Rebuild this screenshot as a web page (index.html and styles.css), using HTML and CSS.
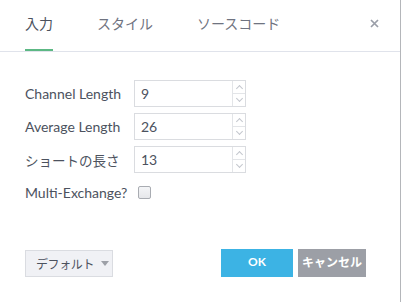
FILE: index.html
```html
<!DOCTYPE html>
<html lang="ja">

<head>
  <meta charset="UTF-8">
  <title>Indicator Settings</title>
  <link rel="stylesheet" href="styles.css">
</head>

<body>
  <div class="dialog">
    <div class="tabs">
      <a class="tab active" href="#">入力</a>
      <a class="tab" href="#">スタイル</a>
      <a class="tab" href="#">ソースコード</a>
      <span class="close">
        <svg width="9" height="9" viewBox="0 0 9 9">
          <path d="M1 1L8 8M8 1L1 8" stroke="#9a9ea8" stroke-width="1.7" fill="none" />
        </svg>
      </span>
    </div>

    <div class="content">
      <label class="label" for="channel">Channel Length</label>
      <div class="spin">
        <input id="channel" type="text" value="9">
        <div class="arrows">
          <span class="up"></span>
          <span class="down"></span>
        </div>
      </div>

      <label class="label" for="average">Average Length</label>
      <div class="spin">
        <input id="average" type="text" value="26">
        <div class="arrows">
          <span class="up"></span>
          <span class="down"></span>
        </div>
      </div>

      <label class="label label-ja" for="short">ショートの長さ</label>
      <div class="spin">
        <input id="short" type="text" value="13">
        <div class="arrows">
          <span class="up"></span>
          <span class="down"></span>
        </div>
      </div>

      <label class="label" for="multi">Multi-Exchange?</label>
      <div class="check-cell">
        <span class="checkbox" id="multi"></span>
      </div>
    </div>

    <div class="footer">
      <button class="btn-default" type="button"><span class="btn-text">デフォルト</span><span class="caret"></span></button>
      <div class="actions">
        <button class="btn-ok" type="button">OK</button>
        <button class="btn-cancel" type="button">キャンセル</button>
      </div>
    </div>
  </div>
</body>

</html>
```

FILE: styles.css
```css
body {
  margin: 0;
  background-color: #ffffff;
  font-family: 'Lato', 'Noto Sans CJK JP', sans-serif;
  color: #4c525e;
}

.dialog {
  width: 401px;
  height: 302px;
  box-sizing: border-box;
  border-right: 1px solid #b4b6ba;
  display: flex;
  flex-direction: column;
}

.tabs {
  display: flex;
  align-items: flex-end;
  height: 51px;
  padding: 0 21px 0 25px;
  border-bottom: 1px solid #e0e3eb;
}

.tab {
  display: block;
  height: 49px;
  line-height: 48px;
  margin-right: 44px;
  font-size: 14px;
  color: #6f7380;
  text-decoration: none;
  border-bottom: 2px solid transparent;
}

.tab.active {
  color: #4c525e;
  border-bottom-color: #5cb884;
}

.close {
  margin-left: auto;
  align-self: center;
  display: flex;
  margin-bottom: 5px;
}

.content {
  display: grid;
  grid-template-columns: 109px 112px;
  grid-auto-rows: 27px;
  row-gap: 6px;
  align-items: center;
  padding: 28px 25px 0;
}

.label {
  font-size: 14px;
  color: #4c525e;
  white-space: nowrap;
}

.label-ja {
  font-size: 13.5px;
}

.spin {
  display: flex;
  height: 27px;
  box-sizing: border-box;
  border: 1px solid #dadce0;
}

.spin input {
  flex: 1;
  min-width: 0;
  border: none;
  outline: none;
  padding: 0 6px;
  font-family: 'Lato', sans-serif;
  font-size: 14px;
  color: #4c525e;
  background: transparent;
}

.arrows {
  width: 12px;
  display: flex;
  flex-direction: column;
  border-left: 1px solid #e3e5e8;
}

.arrows span {
  flex: 1;
  position: relative;
}

.arrows .up {
  border-bottom: 1px solid #e3e5e8;
}

.arrows span::after {
  content: "";
  position: absolute;
  left: 4px;
  width: 4px;
  height: 4px;
  border-left: 1px solid #c3c7cd;
  border-top: 1px solid #c3c7cd;
}

.arrows .up::after {
  top: 5px;
  transform: rotate(45deg);
}

.arrows .down::after {
  top: 2px;
  transform: rotate(225deg);
}

.check-cell {
  display: flex;
  align-items: center;
}

.checkbox {
  width: 11px;
  height: 11px;
  margin-left: 4px;
  border: 1px solid #a9acb2;
  border-radius: 2px;
  background: linear-gradient(#f4f5f7, #e6e7ea);
}

.footer {
  margin-top: auto;
  display: flex;
  justify-content: space-between;
  align-items: flex-end;
  padding: 0 34px 25px 25px;
}

.footer button {
  border: none;
  font-family: 'Lato', 'Noto Sans CJK JP', sans-serif;
  cursor: pointer;
  padding: 0;
  white-space: nowrap;
}

.btn-default {
  width: 88px;
  height: 27px;
  box-sizing: border-box;
  border: 1px solid #dadce1 !important;
  background-color: #f0f1f5;
  color: #4c525e;
  font-size: 12px;
  letter-spacing: -0.4px;
  display: flex;
  align-items: center;
  padding-left: 10px !important;
}

.btn-text {
  margin-right: 7px;
}

.caret {
  flex-shrink: 0;
  width: 0;
  height: 0;
  border-left: 4px solid transparent;
  border-right: 4px solid transparent;
  border-top: 5px solid #9da0a7;
}

.actions {
  display: flex;
  gap: 5px;
}

.btn-ok,
.btn-cancel {
  height: 28px;
  color: #ffffff;
  font-weight: bold;
  font-size: 12px;
  padding-bottom: 3px !important;
}

.btn-ok {
  width: 72px;
  background-color: #3cb3e4;
}

.btn-cancel {
  width: 68px;
  background-color: #9c9fa6;
}
```
